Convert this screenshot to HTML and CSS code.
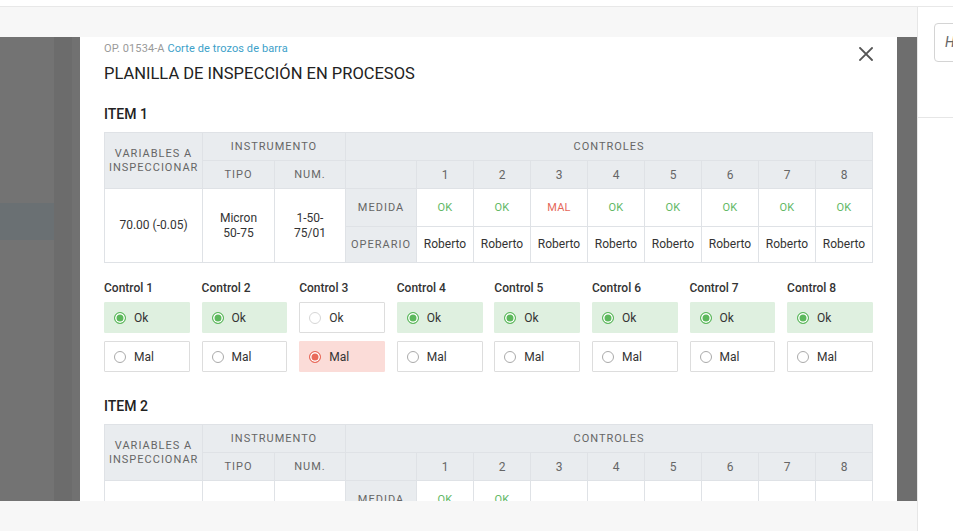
FILE: index.html
```html
<!DOCTYPE html>
<html lang="es">
<head>
<meta charset="utf-8">
<title>Planilla de inspección en procesos</title>
<link rel="stylesheet" href="styles.css">
</head>
<body>
<header class="topbar"></header>
<div class="layout">
  <main class="main">
    <div class="stage">
      <div class="backdrop-left">
        <div class="bd-col bd-a"><div class="bd-band"></div></div>
        <div class="bd-col bd-b"></div>
        <div class="bd-col bd-c"></div>
      </div>
      <section class="modal">
        <div class="modal-head">
          <div class="heading">
            <div class="subtitle">OP. 01534-A <a class="op-link">Corte de trozos de barra</a></div>
            <h1 class="title">PLANILLA DE INSPECCIÓN EN PROCESOS</h1>
          </div>
          <button class="close" aria-label="Cerrar">
            <svg width="14" height="14" viewBox="0 0 14 14"><path d="M1 1 L13 13 M13 1 L1 13" stroke="#555" stroke-width="1.8" stroke-linecap="square" fill="none"/></svg>
          </button>
        </div>

        <h2 class="item-title">ITEM 1</h2>
        <table class="grid">
          <colgroup>
            <col class="c-var"><col class="c-tipo"><col class="c-num"><col class="c-lbl">
            <col><col><col><col><col><col><col><col>
          </colgroup>
          <thead>
            <tr class="hr1">
              <th rowspan="2" class="h">VARIABLES A<br>INSPECCIONAR</th>
              <th colspan="2" class="h">INSTRUMENTO</th>
              <th colspan="9" class="h">CONTROLES</th>
            </tr>
            <tr class="hr2">
              <th class="h">TIPO</th><th class="h">NUM.</th><th></th>
              <th>1</th><th>2</th><th>3</th><th>4</th><th>5</th><th>6</th><th>7</th><th>8</th>
            </tr>
          </thead>
          <tbody>
            <tr class="br1">
              <td rowspan="2">70.00 (-0.05)</td>
              <td rowspan="2">Micron<br>50-75</td>
              <td rowspan="2">1-50-<br>75/01</td>
              <th class="lbl">MEDIDA</th>
              <td class="ok">OK</td><td class="ok">OK</td><td class="mal">MAL</td><td class="ok">OK</td>
              <td class="ok">OK</td><td class="ok">OK</td><td class="ok">OK</td><td class="ok">OK</td>
            </tr>
            <tr class="br2">
              <th class="lbl">OPERARIO</th>
              <td>Roberto</td><td>Roberto</td><td>Roberto</td><td>Roberto</td>
              <td>Roberto</td><td>Roberto</td><td>Roberto</td><td>Roberto</td>
            </tr>
          </tbody>
        </table>

        <div class="controls">
          <div class="control">
            <div class="ctl-label">Control 1</div>
            <label class="opt sel-ok"><span class="radio on-ok"></span>Ok</label>
            <label class="opt"><span class="radio"></span>Mal</label>
          </div>
          <div class="control">
            <div class="ctl-label">Control 2</div>
            <label class="opt sel-ok"><span class="radio on-ok"></span>Ok</label>
            <label class="opt"><span class="radio"></span>Mal</label>
          </div>
          <div class="control">
            <div class="ctl-label">Control 3</div>
            <label class="opt"><span class="radio faint"></span>Ok</label>
            <label class="opt sel-mal"><span class="radio on-mal"></span>Mal</label>
          </div>
          <div class="control">
            <div class="ctl-label">Control 4</div>
            <label class="opt sel-ok"><span class="radio on-ok"></span>Ok</label>
            <label class="opt"><span class="radio"></span>Mal</label>
          </div>
          <div class="control">
            <div class="ctl-label">Control 5</div>
            <label class="opt sel-ok"><span class="radio on-ok"></span>Ok</label>
            <label class="opt"><span class="radio"></span>Mal</label>
          </div>
          <div class="control">
            <div class="ctl-label">Control 6</div>
            <label class="opt sel-ok"><span class="radio on-ok"></span>Ok</label>
            <label class="opt"><span class="radio"></span>Mal</label>
          </div>
          <div class="control">
            <div class="ctl-label">Control 7</div>
            <label class="opt sel-ok"><span class="radio on-ok"></span>Ok</label>
            <label class="opt"><span class="radio"></span>Mal</label>
          </div>
          <div class="control">
            <div class="ctl-label">Control 8</div>
            <label class="opt sel-ok"><span class="radio on-ok"></span>Ok</label>
            <label class="opt"><span class="radio"></span>Mal</label>
          </div>
        </div>

        <h2 class="item-title item-2">ITEM 2</h2>
        <table class="grid">
          <colgroup>
            <col class="c-var"><col class="c-tipo"><col class="c-num"><col class="c-lbl">
            <col><col><col><col><col><col><col><col>
          </colgroup>
          <thead>
            <tr class="hr1">
              <th rowspan="2" class="h">VARIABLES A<br>INSPECCIONAR</th>
              <th colspan="2" class="h">INSTRUMENTO</th>
              <th colspan="9" class="h">CONTROLES</th>
            </tr>
            <tr class="hr2">
              <th class="h">TIPO</th><th class="h">NUM.</th><th></th>
              <th>1</th><th>2</th><th>3</th><th>4</th><th>5</th><th>6</th><th>7</th><th>8</th>
            </tr>
          </thead>
          <tbody>
            <tr class="br1">
              <td rowspan="2"></td>
              <td rowspan="2"></td>
              <td rowspan="2"></td>
              <th class="lbl">MEDIDA</th>
              <td class="ok">OK</td><td class="ok">OK</td><td></td><td></td>
              <td></td><td></td><td></td><td></td>
            </tr>
            <tr class="br2">
              <th class="lbl">OPERARIO</th>
              <td>Roberto</td><td>Roberto</td><td></td><td></td>
              <td></td><td></td><td></td><td></td>
            </tr>
          </tbody>
        </table>
      </section>
      <div class="backdrop-right"></div>
    </div>
  </main>
  <aside class="side">
    <div class="side-top">
      <div class="search">H</div>
    </div>
  </aside>
</div>
</body>
</html>
```

FILE: styles.css
```css
* { box-sizing: border-box; }
html, body { margin: 0; padding: 0; }
body {
  width: 953px;
  height: 531px;
  overflow: hidden;
  background: #fff;
  font-family: Roboto, "Noto Sans", sans-serif;
  color: #333;
}
.topbar {
  height: 7px;
  border-bottom: 1px solid #e8e8e8;
  background: #fff;
}
.layout {
  display: flex;
  height: 524px;
}
.main {
  width: 917px;
  flex: none;
  background: #f7f7f7;
  padding: 30px 0;
}
.stage {
  display: flex;
  height: 464px;
  overflow: hidden;
}
.backdrop-left {
  width: 80px;
  flex: none;
  display: flex;
}
.bd-col { height: 100%; }
.bd-a { width: 54px; background: #737373; padding-top: 166px; }
.bd-band { height: 37px; background: #6a7073; }
.bd-b { width: 18px; background: #6c6c6c; }
.bd-c { width: 8px; background: #717171; }
.backdrop-right {
  width: 20px;
  flex: none;
  background: #6e6e6e;
}
.modal {
  width: 817px;
  flex: none;
  background: #fff;
  padding: 4px 24px 0;
  overflow: hidden;
}
.modal-head {
  display: flex;
  justify-content: space-between;
  align-items: flex-start;
}
.subtitle {
  font-size: 11px;
  line-height: 16px;
  color: #9a9a9a;
  letter-spacing: 0.1px;
}
.op-link { color: #3d9fc9; }
.title {
  margin: 7px 0 0;
  font-size: 16.5px;
  line-height: 20px;
  font-weight: 400;
  color: #222;
  letter-spacing: 0;
}
.close {
  border: 0;
  background: none;
  padding: 0;
  margin-top: 6px;
  width: 14px;
  height: 14px;
  display: flex;
}
.item-title {
  margin: 21px 0 0;
  font-size: 14px;
  line-height: 18px;
  font-weight: 500;
  color: #222;
}
.item-2 { margin-top: 25px; }
.grid {
  width: 769px;
  margin-top: 9px;
  border-collapse: collapse;
  table-layout: fixed;
  font-size: 12px;
  color: #333;
}
.c-var { width: 98px; }
.c-tipo { width: 72px; }
.c-num { width: 71px; }
.c-lbl { width: 71px; }
.grid th, .grid td {
  border: 1px solid #dfe2e6;
  text-align: center;
  vertical-align: middle;
  padding: 0 4px;
}
.grid th {
  background: #e9ecef;
  font-weight: 400;
  color: #666;
  font-size: 12px;
}
.grid th.h, .grid th.lbl {
  font-size: 11px;
  letter-spacing: 1px;
  line-height: 14px;
}
.hr1, .hr2 { height: 28px; }
.br1 { height: 38px; }
.br2 { height: 36px; }
.grid td { line-height: 15px; }
.grid td.ok { color: #62b866; font-size: 11px; letter-spacing: 0.3px; }
.grid td.mal { color: #e5675a; font-size: 11px; letter-spacing: 0.3px; }
.controls {
  display: grid;
  grid-template-columns: repeat(8, 1fr);
  column-gap: 11.7px;
  margin-top: 17px;
}
.control {
  display: flex;
  flex-direction: column;
}
.ctl-label {
  font-size: 12px;
  line-height: 16px;
  font-weight: 500;
  color: #333;
  margin-bottom: 6px;
}
.opt {
  height: 31px;
  display: flex;
  align-items: center;
  gap: 8px;
  padding-left: 9px;
  border: 1px solid #ddd;
  border-radius: 1px;
  font-size: 12px;
  color: #333;
  background: #fff;
}
.opt + .opt { margin-top: 8px; }
.sel-ok { background: #dff0e0; border-color: #dff0e0; }
.sel-mal { background: #fbdcd8; border-color: #fbdcd8; }
.radio {
  width: 12px;
  height: 12px;
  border-radius: 50%;
  border: 1px solid #aaa;
  background: #fff;
  flex: none;
}
.radio.faint { border-color: #d6d6d6; }
.radio.on-ok {
  border-color: #5cb85c;
  background: #5cb85c;
  box-shadow: inset 0 0 0 1.5px #fff;
}
.radio.on-mal {
  border-color: #e96b5b;
  background: #e96b5b;
  box-shadow: inset 0 0 0 1.5px #fff;
}
.side {
  flex: 1;
  border-left: 1px solid #e6e6e6;
  background: #fff;
  overflow: hidden;
}
.side-top {
  height: 111px;
  border-bottom: 1px solid #e6e6e6;
  padding: 16px 0 0 16px;
}
.search {
  width: 160px;
  height: 39px;
  border: 1px solid #d4d4d4;
  border-radius: 4px;
  font-size: 14px;
  line-height: 37px;
  padding-left: 10px;
  color: #666;
  font-style: italic;
}
```
